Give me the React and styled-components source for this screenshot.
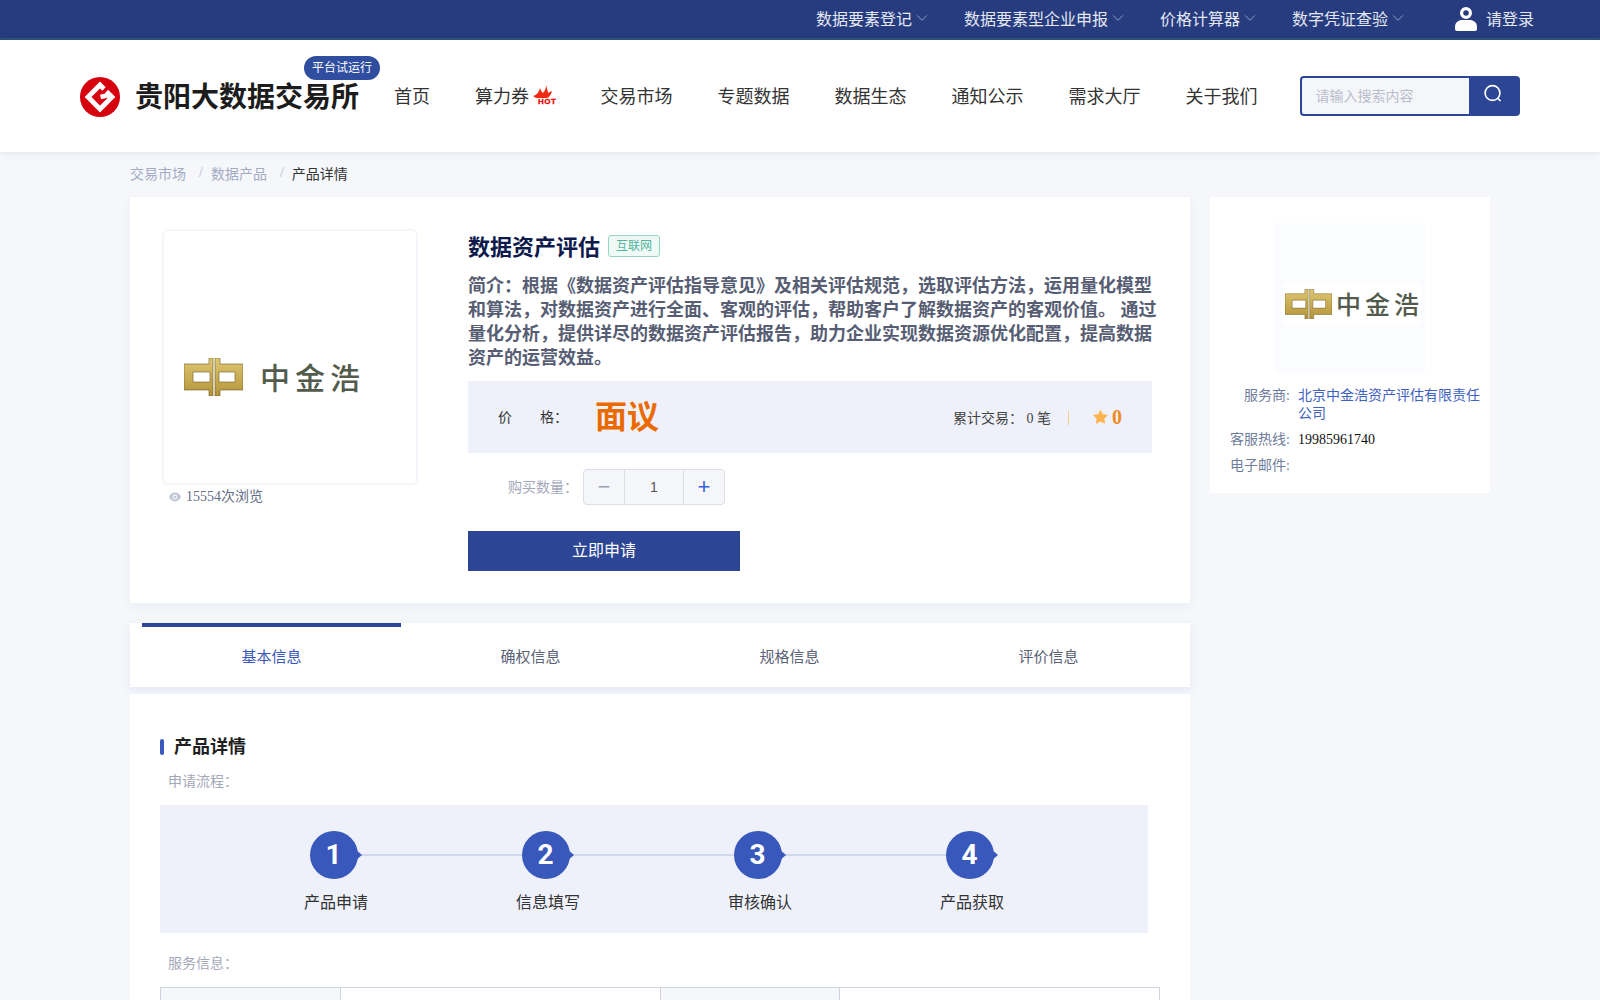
import React from 'react';
import styled, { createGlobalStyle } from 'styled-components';
import { ChevronDown } from 'lucide-react';
import { AiFillEye, AiFillStar } from 'react-icons/ai';

const GlobalStyle = createGlobalStyle`
  html, body {
    margin: 0;
    height: 100%;
    overflow: hidden;
    background: #f5f7fb;
    font-family: "Liberation Serif", "Noto Sans CJK SC", serif;
    color: #333;
  }
  * { box-sizing: border-box; }
`;

const TopBar = styled.div`
  height: 40px;
  background: #273c7f;
  border-bottom: 2px solid #2a5577;
  display: flex;
  justify-content: flex-end;
  align-items: center;
  padding: 0 66px 1px 0;
  color: #e4e8f4;
  font-size: 16px;
`;

const TopItem = styled.div`
  display: flex;
  align-items: center;
  gap: 1px;
  margin-left: 35px;
  padding-bottom: 2px;
  svg {
    margin-right: -2px;
    color: #a5b1d6;
  }
`;

const LoginBox = styled.div`
  display: flex;
  align-items: center;
  gap: 9px;
  margin-left: 50px;
`;

const LoginText = styled.span`
  padding-bottom: 2px;
`;

const Header = styled.header`
  height: 112px;
  background: #fff;
  box-shadow: 0 1px 6px rgba(40, 50, 100, 0.1);
  display: flex;
  align-items: center;
  padding-left: 80px;
`;

const Brand = styled.div`
  position: relative;
  display: flex;
  align-items: center;
  gap: 15px;
  svg { margin-top: 2px; }
`;

const BrandName = styled.div`
  padding-bottom: 2px;
  font-size: 28px;
  font-weight: 700;
  color: #1c1c1c;
  white-space: nowrap;
`;

const TrialBadge = styled.span`
  position: absolute;
  left: 224px;
  top: -19px;
  width: 76px;
  height: 24px;
  border-radius: 12px;
  background: #2f4e9f;
  color: #fff;
  font-size: 12px;
  line-height: 24px;
  text-align: center;
`;

const Nav = styled.nav`
  display: flex;
  align-items: center;
  gap: 45px;
  margin-left: 35px;
`;

const NavItem = styled.a`
  display: flex;
  align-items: center;
  gap: 3.5px;
  padding-bottom: 2px;
  font-size: 18px;
  color: #333;
  white-space: nowrap;
`;

const SearchBox = styled.div`
  display: flex;
  width: 220px;
  height: 40px;
  margin-left: 42px;
  border: 2px solid #2c4695;
  border-radius: 4px;
  background: #2c4695;
  overflow: hidden;
`;

const SearchInput = styled.div`
  width: 167px;
  background: #f5f6fa;
  color: #b9bdcb;
  font-size: 14px;
  line-height: 37px;
  padding-left: 14px;
`;

const SearchButton = styled.div`
  flex: 1;
  display: flex;
  justify-content: center;
  padding-top: 6px;
`;

const Breadcrumb = styled.div`
  height: 45px;
  padding: 0 0 4px 130px;
  display: flex;
  align-items: center;
  font-size: 14px;
  color: #a3abc4;
`;

const CrumbSep = styled.span`
  margin: 0 8px 0 13px;
  color: #b5bac8;
`;

const CrumbNow = styled.span`
  color: #333;
`;

const Columns = styled.div`
  display: grid;
  grid-template-columns: 1060px 280px;
  gap: 20px;
  padding-left: 130px;
  align-items: start;
`;

const ProductCard = styled.section`
  background: #fff;
  height: 406px;
  padding: 32px 0 0 32px;
  display: flex;
  gap: 50px;
  box-shadow: 0 4px 10px rgba(40, 50, 100, 0.05);
`;

const Gallery = styled.div`
  width: 256px;
  flex: none;
`;

const GalleryBox = styled.div`
  height: 256px;
  border: 2px solid #f5f6fb;
  border-radius: 6px;
  padding: 127px 0 0 20px;
`;

const LogoRow = styled.div`
  display: flex;
  align-items: center;
  gap: ${p => (p.$small ? 4 : 17)}px;
`;

const LogoText = styled.span`
  margin-top: 3px;
  font-size: ${p => (p.$small ? 25 : 30)}px;
  font-weight: 500;
  letter-spacing: ${p => (p.$small ? 4 : 5)}px;
  line-height: 1;
  color: #535c4c;
  white-space: nowrap;
`;

const Views = styled.div`
  display: flex;
  align-items: center;
  gap: 4px;
  margin-top: 2px;
  padding-left: 6px;
  font-size: 14px;
  line-height: 20px;
  color: #646b85;
  svg { color: #c2c8d8; }
`;

const Info = styled.div`
  width: 690px;
`;

const TitleRow = styled.div`
  display: flex;
  align-items: center;
  gap: 8px;
  height: 34px;
`;

const ProductTitle = styled.h1`
  margin: 0;
  padding-bottom: 2px;
  font-size: 22px;
  font-weight: 700;
  color: #0e1a4c;
`;

const IndustryTag = styled.span`
  height: 22px;
  padding: 0 7px;
  border: 1px solid #95d6c2;
  border-radius: 3px;
  background: #eff9f6;
  color: #52b59a;
  font-size: 12px;
  line-height: 20px;
`;

const Summary = styled.p`
  margin: 11px 0 0;
  font-size: 18px;
  font-weight: 700;
  line-height: 24px;
  color: #575e74;
`;

const PriceBand = styled.div`
  width: 684px;
  height: 72px;
  margin-top: 11px;
  padding: 0 30px;
  background: #eef1fa;
  display: flex;
  align-items: center;
`;

const PriceLabel = styled.div`
  width: 97px;
  padding-bottom: 3px;
  font-size: 14px;
  color: #333;
`;

const PriceChar = styled.span`
  margin-right: 28px;
`;

const PriceValue = styled.div`
  padding-bottom: 7px;
  font-size: 32px;
  font-weight: 700;
  color: #ea6a00;
`;

const Trades = styled.div`
  margin-left: auto;
  font-size: 14px;
  color: #444;
`;

const StatDivider = styled.span`
  width: 1px;
  height: 14px;
  margin: 2px 23px 0 17px;
  background: #f0cf98;
`;

const Score = styled.div`
  display: flex;
  align-items: center;
  gap: 3px;
  font-size: 20px;
  font-weight: 700;
  color: #f08a1d;
  svg { color: #fdb44e; }
`;

const QuantityRow = styled.div`
  display: flex;
  align-items: center;
  margin-top: 16px;
  padding-left: 40px;
  font-size: 14px;
  color: #a3a8b8;
`;

const QuantityLabel = styled.span`
  width: 75px;
  padding-bottom: 2px;
`;

const Stepper = styled.div`
  display: grid;
  grid-template-columns: 40px 59px 41px;
  width: 142px;
  height: 36px;
  border: 1px solid #dcdfe8;
  border-radius: 4px;
  background: #f5f6fa;
`;

const StepperCell = styled.div`
  display: flex;
  align-items: center;
  justify-content: center;
  font-family: "Liberation Sans", sans-serif;
  font-size: ${p => (p.$sign ? 22 : 14)}px;
  font-weight: 300;
  color: ${p => p.$color || '#555'};
  & + & { border-left: 1px solid #dcdfe8; }
`;

const ApplyButton = styled.button`
  display: block;
  width: 272px;
  height: 40px;
  margin-top: 26px;
  padding-bottom: 6px;
  border: 0;
  background: #2c4695;
  color: #fff;
  font-family: inherit;
  font-size: 16px;
`;

const Tabs = styled.div`
  display: flex;
  height: 64px;
  margin-top: 20px;
  padding: 0 12px;
  background: #fff;
  box-shadow: 0 4px 10px rgba(40, 50, 100, 0.08);
`;

const Tab = styled.div`
  flex: 1;
  border-top: 4px solid ${p => (p.$active ? '#2c4695' : 'transparent')};
  color: ${p => (p.$active ? '#3858bb' : '#5a6275')};
  font-size: 15px;
  line-height: 60px;
  text-align: center;
`;

const DetailCard = styled.section`
  margin-top: 7px;
  padding: 41px 30px 0;
  background: #fff;
  height: 400px;
`;

const SectionTitle = styled.h2`
  display: flex;
  align-items: center;
  gap: 10px;
  margin: 0;
  font-size: 18px;
  font-weight: 700;
  line-height: 24px;
  color: #1f1f1f;
  &::before {
    content: '';
    width: 4px;
    height: 16px;
    border-radius: 2px;
    background: #3858bb;
  }
`;

const SubLabel = styled.div`
  margin-top: ${p => p.$top}px;
  padding-left: 8px;
  font-size: 14px;
  line-height: 20px;
  color: #a3a8b8;
`;

const FlowBand = styled.div`
  display: flex;
  width: 988px;
  height: 128px;
  margin-top: 13px;
  padding: 26px 0 0 70px;
  background: #eef1fa;
`;

const FlowStep = styled.div`
  position: relative;
  width: 212px;
  display: flex;
  flex-direction: column;
  align-items: center;
  &:not(:last-child)::after {
    content: '';
    position: absolute;
    left: 50%;
    top: 23px;
    width: 100%;
    height: 2px;
    background: #cfd8ef;
  }
`;

const FlowCircle = styled.div`
  position: relative;
  z-index: 1;
  width: 48px;
  height: 48px;
  margin-left: -5px;
  border-radius: 50%;
  background: #3858bb;
  color: #fff;
  font-family: Roboto, sans-serif;
  font-size: 28px;
  font-weight: 700;
  line-height: 48px;
  text-align: center;
  &::after {
    content: '';
    position: absolute;
    right: -4px;
    top: 18px;
    border-left: 7px solid #3858bb;
    border-top: 6px solid transparent;
    border-bottom: 6px solid transparent;
  }
`;

const FlowLabel = styled.div`
  margin-top: 12px;
  font-size: 16px;
  line-height: 24px;
  color: #333;
`;

const ServiceTable = styled.div`
  display: grid;
  grid-template-columns: 179px 320px 179px 320px;
  width: 1000px;
  margin-top: 13px;
  border: 1px solid #cfd3e0;
`;

const ServiceCell = styled.div`
  height: 60px;
  background: ${p => (p.$head ? '#f6f7fb' : '#fff')};
  & + & { border-left: 1px solid #cfd3e0; }
`;

const VendorCard = styled.aside`
  height: 296px;
  padding: 26px 8px 0 0;
  background: #fff;
`;

const VendorLogo = styled.div`
  width: 150px;
  height: 150px;
  margin: 0 auto 14px;
  padding-top: 60px;
  background: #fbfcff;
  transform: translateX(4px);
`;

const VendorLogoBand = styled.div`
  width: 138px;
  height: 42px;
  margin-left: 8px;
  padding-left: 2px;
  display: flex;
  align-items: center;
  background: #fff;
`;

const VendorRow = styled.div`
  display: grid;
  grid-template-columns: 80px 1fr;
  gap: 8px;
  margin-bottom: 8px;
  font-size: 14px;
  line-height: 18px;
`;

const VendorKey = styled.div`
  color: #6f7d9c;
  text-align: right;
`;

const VendorValue = styled.div`
  color: ${p => (p.$link ? '#3f62bf' : '#111')};
`;

const RedLogo = () => (
  <svg width="40" height="40" viewBox="0 0 40 40">
    <circle cx="20" cy="20" r="20" fill="#d6000f" />
    <path
      d="M24 12 L20 8 L8 20 L20 32 L32 20 L26.5 14.5 M29 18 L20.5 20"
      fill="none"
      stroke="#fff"
      strokeWidth="4.8"
      strokeLinejoin="miter"
    />
  </svg>
);

const HotMark = () => (
  <svg width="23" height="20" viewBox="0 0 23 20">
    <path d="M0 11 C4 10 6 7 7 3 C8 6 9 7 10 8 C12 6 13 3 13 0 C14 4 15 6 15 8 C17 7 18 6 19 6 C18 9 17 12 14 13 H3 Z" fill="#f02b12" />
    <text x="5" y="19.4" fontFamily="Liberation Sans" fontSize="8" fontWeight="700" fill="#ee0000" stroke="#ee0000" strokeWidth="0.3" textLength="18">HOT</text>
  </svg>
);

const UserIcon = () => (
  <svg width="22" height="24" viewBox="0 0 22 24">
    <circle cx="11" cy="6" r="4.4" fill="none" stroke="#fff" strokeWidth="3.2" />
    <path d="M0 20 C0 15 4 13 7 13 H15 C18 13 22 15 22 20 V22 Q22 24 20 24 H2 Q0 24 0 22 Z" fill="#fff" />
  </svg>
);

const SearchIcon = () => (
  <svg width="20" height="20" viewBox="0 0 20 20">
    <circle cx="9.5" cy="9" r="7.4" fill="none" stroke="#fff" strokeWidth="1.7" />
    <path d="M15 14.5 L17.5 17" stroke="#fff" strokeWidth="1.7" fill="none" />
  </svg>
);

const GoldMark = ({ width }) => (
  <svg width={width} viewBox="0 0 59 38">
    <defs>
      <linearGradient id="gold" x1="0" y1="0" x2="0" y2="1">
        <stop offset="0" stopColor="#e0c873" />
        <stop offset="1" stopColor="#b39338" />
      </linearGradient>
    </defs>
    <path d="M0 6 H25 V0 H29 V38 H25 V32 H0 Z M9 14 V24 H26 V14 Z" fill="url(#gold)" fillRule="evenodd" stroke="#6e5a22" strokeWidth="0.6" />
    <path d="M59 6 H36 V0 H31 V38 H36 V32 H59 Z M51 14 V24 H35 V14 Z" fill="url(#gold)" fillRule="evenodd" stroke="#6e5a22" strokeWidth="0.6" />
  </svg>
);

const topItems = ['数据要素登记', '数据要素型企业申报', '价格计算器', '数字凭证查验'];
const navItems = ['交易市场', '专题数据', '数据生态', '通知公示', '需求大厅', '关于我们'];
const tabs = ['基本信息', '确权信息', '规格信息', '评价信息'];
const steps = ['产品申请', '信息填写', '审核确认', '产品获取'];

export default function App() {
  return (
    <>
      <GlobalStyle />
      <TopBar>
        {topItems.map(item => (
          <TopItem key={item}>
            {item}
            <ChevronDown size={18} strokeWidth={1.1} />
          </TopItem>
        ))}
        <LoginBox>
          <UserIcon />
          <LoginText>请登录</LoginText>
        </LoginBox>
      </TopBar>
      <Header>
        <Brand>
          <RedLogo />
          <BrandName>贵阳大数据交易所</BrandName>
          <TrialBadge>平台试运行</TrialBadge>
        </Brand>
        <Nav>
          <NavItem>首页</NavItem>
          <NavItem>
            算力券
            <HotMark />
          </NavItem>
          {navItems.map(item => (
            <NavItem key={item}>{item}</NavItem>
          ))}
        </Nav>
        <SearchBox>
          <SearchInput>请输入搜索内容</SearchInput>
          <SearchButton>
            <SearchIcon />
          </SearchButton>
        </SearchBox>
      </Header>
      <Breadcrumb>
        交易市场
        <CrumbSep>/</CrumbSep>
        数据产品
        <CrumbSep>/</CrumbSep>
        <CrumbNow>产品详情</CrumbNow>
      </Breadcrumb>
      <Columns>
        <div>
          <ProductCard>
            <Gallery>
              <GalleryBox>
                <LogoRow>
                  <GoldMark width={59} />
                  <LogoText>中金浩</LogoText>
                </LogoRow>
              </GalleryBox>
              <Views>
                <AiFillEye size={14} />
                15554次浏览
              </Views>
            </Gallery>
            <Info>
              <TitleRow>
                <ProductTitle>数据资产评估</ProductTitle>
                <IndustryTag>互联网</IndustryTag>
              </TitleRow>
              <Summary>
                简介：根据《数据资产评估指导意见》及相关评估规范，选取评估方法，运用量化模型和算法，对数据资产进行全面、客观的评估，帮助客户了解数据资产的客观价值。 通过量化分析，提供详尽的数据资产评估报告，助力企业实现数据资源优化配置，提高数据资产的运营效益。
              </Summary>
              <PriceBand>
                <PriceLabel>
                  <PriceChar>价</PriceChar>格：
                </PriceLabel>
                <PriceValue>面议</PriceValue>
                <Trades>累计交易： 0 笔</Trades>
                <StatDivider />
                <Score>
                  <AiFillStar size={17} />0
                </Score>
              </PriceBand>
              <QuantityRow>
                <QuantityLabel>购买数量：</QuantityLabel>
                <Stepper>
                  <StepperCell $sign $color="#9aa0b0">−</StepperCell>
                  <StepperCell>1</StepperCell>
                  <StepperCell $sign $color="#3b5fe0">+</StepperCell>
                </Stepper>
              </QuantityRow>
              <ApplyButton>立即申请</ApplyButton>
            </Info>
          </ProductCard>
          <Tabs>
            {tabs.map((tab, index) => (
              <Tab key={tab} $active={index === 0}>{tab}</Tab>
            ))}
          </Tabs>
          <DetailCard>
            <SectionTitle>产品详情</SectionTitle>
            <SubLabel $top={13}>申请流程：</SubLabel>
            <FlowBand>
              {steps.map((step, index) => (
                <FlowStep key={step}>
                  <FlowCircle>{index + 1}</FlowCircle>
                  <FlowLabel>{step}</FlowLabel>
                </FlowStep>
              ))}
            </FlowBand>
            <SubLabel $top={21}>服务信息：</SubLabel>
            <ServiceTable>
              <ServiceCell $head />
              <ServiceCell />
              <ServiceCell $head />
              <ServiceCell />
            </ServiceTable>
          </DetailCard>
        </div>
        <VendorCard>
          <VendorLogo>
            <VendorLogoBand>
              <LogoRow $small>
                <GoldMark width={47} />
                <LogoText $small>中金浩</LogoText>
              </LogoRow>
            </VendorLogoBand>
          </VendorLogo>
          <VendorRow>
            <VendorKey>服务商:</VendorKey>
            <VendorValue $link>北京中金浩资产评估有限责任公司</VendorValue>
          </VendorRow>
          <VendorRow>
            <VendorKey>客服热线:</VendorKey>
            <VendorValue>19985961740</VendorValue>
          </VendorRow>
          <VendorRow>
            <VendorKey>电子邮件:</VendorKey>
            <VendorValue />
          </VendorRow>
        </VendorCard>
      </Columns>
    </>
  );
}
